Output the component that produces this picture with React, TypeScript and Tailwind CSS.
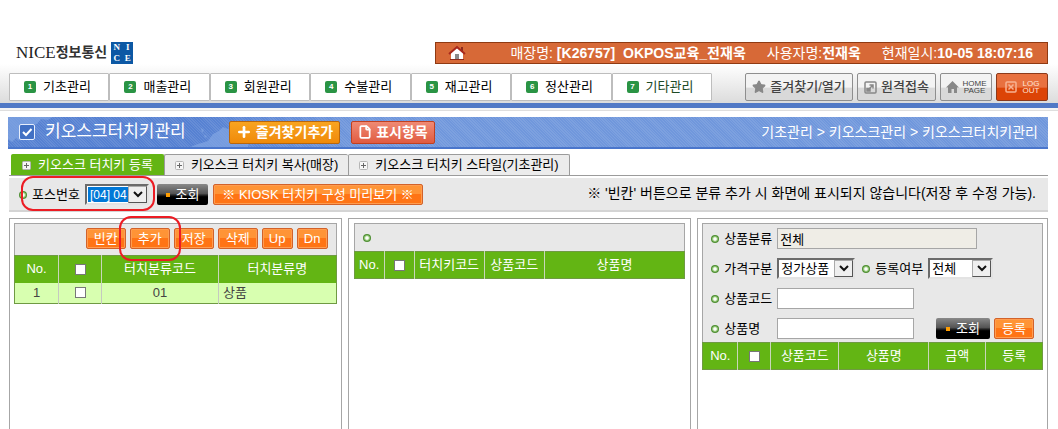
import type { ReactNode } from 'react';
import clsx from 'clsx';
import { File, Plus, Star } from 'lucide-react';

const menus = ['기초관리', '매출관리', '회원관리', '수불관리', '재고관리', '정산관리', '기타관리'];
const tabs = ['키오스크 터치키 등록', '키오스크 터치키 복사(매장)', '키오스크 터치키 스타일(기초관리)'];

function Bullet() {
  return (
    <svg viewBox="0 0 8 8" className="h-2 w-2 shrink-0" aria-hidden="true">
      <circle cx="4" cy="4" r="4" fill="#4f8f33" />
      <circle cx="4" cy="4" r="2.8" fill="#a9d68f" />
      <path d="M4 2.200v3.600M2.200 4h3.600" stroke="#fff" strokeWidth="1.6" />
    </svg>
  );
}

function OrangeButton({ children, className }: { children: ReactNode; className?: string }) {
  return (
    <button
      type="button"
      className={clsx(
        'h-[21px] shrink-0 whitespace-nowrap rounded-xs border border-[#d2622a] bg-linear-to-b from-[#ff9436] from-45% to-[#ff7415] to-50% text-[13px] leading-[18px] text-white shadow-[inset_0_0_0_1px_#ff9d50]',
        className,
      )}
    >
      {children}
    </button>
  );
}

function SearchButton({ className }: { className?: string }) {
  return (
    <button
      type="button"
      className={clsx(
        'flex h-[21px] shrink-0 items-center justify-center gap-1.5 rounded-xs bg-linear-to-b from-[#8a8a8a] via-[#555] via-45% to-black to-65% text-[13px] leading-[18px] text-white',
        className,
      )}
    >
      <span className="h-1 w-1 bg-[#ff9d00]" />
      조회
    </button>
  );
}

interface SelectBoxProps {
  id: string;
  value: string;
  className?: string;
  selected?: boolean;
}

function SelectBox({ id, value, className, selected }: SelectBoxProps) {
  return (
    <div
      className={clsx(
        'relative h-[21px] shrink-0 border-2 border-t-[#6b6b6b] border-r-[#e3e3e3] border-b-[#e3e3e3] border-l-[#6b6b6b] bg-white',
        selected && 'p-px',
        className,
      )}
    >
      <select
        id={id}
        className={clsx(
          'block h-full w-full appearance-none outline-none',
          selected ? 'bg-[#0078d7] pl-0.5 text-xs leading-4 text-white' : 'pl-0.5 text-[13px] leading-4 text-black',
        )}
      >
        <option>{value}</option>
      </select>
      <span className="pointer-events-none absolute inset-y-0 right-0 flex w-[19px] items-center justify-center border border-t-[#aaa] border-r-[#555] border-b-[#555] border-l-[#aaa] bg-[#efefef]">
        <svg viewBox="0 0 10 7" className="h-[7px] w-2.5" fill="none" stroke="#111" strokeWidth="2">
          <path d="M1 1l4 4 4-4" />
        </svg>
      </span>
    </div>
  );
}

function CheckBox({ label }: { label: string }) {
  return (
    <input
      type="checkbox"
      aria-label={label}
      className="mx-auto block h-[11px] w-[11px] appearance-none border border-[#777] bg-white"
    />
  );
}

interface GridTableProps {
  name: string;
  columns: { label: string; width: string }[];
  rows?: string[][];
}

function GridTable({ name, columns, rows = [] }: GridTableProps) {
  return (
    <table className="w-full table-fixed border-collapse border border-[#6f9a43] text-[13px] leading-[18px]">
      <thead>
        <tr className="h-[27px] bg-[#63b514] text-white">
          {columns.map((col, i) => (
            <th
              key={i}
              className={clsx('overflow-hidden whitespace-nowrap border-r border-[#c9d6bb] font-normal last:border-r-0', col.width)}
            >
              {col.label || <CheckBox label={`${name} 전체`} />}
            </th>
          ))}
        </tr>
      </thead>
      <tbody>
        {rows.map((row) => (
          <tr key={row[0]} className="h-[21px] bg-[#d8ffb0] text-[#444]">
            {row.map((cell, i) => (
              <td
                key={i}
                className={clsx('border-r border-[#c5c9c0] last:border-r-0', i === row.length - 1 ? 'pl-1' : 'text-center')}
              >
                {cell || <CheckBox label={`${name} ${row[0]}`} />}
              </td>
            ))}
          </tr>
        ))}
      </tbody>
    </table>
  );
}

function FieldLabel({ id, children }: { id: string; children: ReactNode }) {
  return (
    <label htmlFor={id} className="flex w-[66px] shrink-0 items-center gap-[5px] whitespace-nowrap">
      <Bullet />
      {children}
    </label>
  );
}

function Header() {
  const grayButton =
    'flex h-7 items-center justify-center gap-1 whitespace-nowrap rounded-xs border border-[#8e8e8e] bg-linear-to-b from-[#f3f3f3] from-50% to-[#d9d9d9] to-55% font-medium text-[#444]';
  return (
    <header>
      <div className="flex items-start justify-between pt-[42px] pr-2.5 pl-4">
        <div className="flex items-center gap-1">
          <span className="flex items-center whitespace-nowrap font-['Liberation_Serif','Noto_Sans_CJK_KR',serif] leading-[22px]">
            <span className="text-[17px] text-[#222]">NICE</span>
            <span className="text-sm font-bold text-[#333]">정보통신</span>
          </span>
          <span className="grid h-[22px] w-[22px] grid-cols-2 place-items-center bg-[#0c58a4] font-['Liberation_Serif',serif] text-[9px] leading-[9px] font-bold text-white">
            <span>N</span>
            <span>I</span>
            <span>C</span>
            <span>E</span>
          </span>
        </div>
        <div className="flex h-[22px] w-[613px] items-center justify-between border border-[#8f3a12] bg-[#d76937] pr-3.5 pl-3 text-sm leading-5 whitespace-nowrap text-white">
          <svg viewBox="0 0 18 16" className="h-4 w-[18px]" aria-hidden="true">
            <path d="M3 8l6-5 6 5v6H3z" fill="#fff" />
            <path d="M13 2h2v4h-2z" fill="#8c2a1c" />
            <path d="M1 9l8-7 8 7" fill="none" stroke="#a8281c" strokeWidth="2" />
            <path d="M7 9h4v5H7z" fill="#8a8a8a" />
            <path d="M2 14.500h14" stroke="#8c2a1c" />
          </svg>
          <div className="flex gap-[21px]">
            <span>
              매장명: <b>[K26757]&nbsp; OKPOS교육_전재욱</b>
            </span>
            <span>
              사용자명:<b>전재욱</b>
            </span>
            <span>
              현재일시:<b>10-05 18:07:16</b>
            </span>
          </div>
        </div>
      </div>
      <div className="flex items-start justify-between bg-linear-to-b from-white to-[#dcdcdc] pt-[9px] pr-2.5 pb-0.5 pl-[9px]">
        <nav className="flex w-[703px]">
          {menus.map((menu, i) => (
            <a
              key={menu}
              href="#"
              className={clsx(
                'flex h-7 flex-1 items-center gap-[7px] rounded-[1px] border border-[#bdbdbd] bg-white pl-3.5 text-[13px] whitespace-nowrap',
                i === 6 ? 'text-[#1d4a25]' : 'text-black',
              )}
            >
              <span className="flex h-3 w-3 items-center justify-center rounded-xs bg-[#2a9444] text-[8px] leading-3 font-bold text-white">
                {i + 1}
              </span>
              {menu}
            </a>
          ))}
        </nav>
        <div className="flex gap-1 text-[13px] leading-[18px]">
          <button type="button" className={clsx(grayButton, 'w-[108px]')}>
            <Star className="h-3.5 w-3.5 fill-[#888] text-[#888]" />
            즐겨찾기/열기
          </button>
          <button type="button" className={clsx(grayButton, 'w-[79px]')}>
            <svg viewBox="0 0 13 13" className="h-[13px] w-[13px]" fill="none" stroke="#888" strokeWidth="1.500">
              <rect x="1" y="1" width="11" height="11" rx="1" />
              <path d="M5 8l4-4M5.500 4H9v3.500" />
              <path d="M3 7.500h3V10H3z" fill="#888" />
            </svg>
            원격접속
          </button>
          <button type="button" className={clsx(grayButton, 'w-[52px]')}>
            <svg viewBox="0 0 13 13" className="h-[13px] w-[13px]" fill="#888">
              <path d="M6.500 0L13 6.500h-2V12H8V8H5.500v4H2V6.500H0z" />
            </svg>
            <span className="text-[8px] leading-[7px]">
              HOME
              <br />
              PAGE
            </span>
          </button>
          <button
            type="button"
            className="flex h-7 w-[52px] items-center justify-center gap-1.5 rounded-xs border border-[#8c3a1a] bg-linear-to-b from-[#e8713f] from-50% to-[#dc4406] to-55% text-[8px] leading-[7px] text-[#ffe4d6]"
          >
            <svg viewBox="0 0 12 12" className="h-3 w-3" fill="none" stroke="#f7b393" strokeWidth="1.500">
              <rect x="1" y="1" width="10" height="10" rx="1" />
              <path d="M3.500 3.500l5 5M8.500 3.500l-5 5" />
            </svg>
            <span>
              LOG
              <br />
              OUT
            </span>
          </button>
        </div>
      </div>
      <div className="h-[5px] bg-[#5179c6]" />
      <div className="h-[3px] border-b border-[#dedede] bg-[#f4f4f4]" />
    </header>
  );
}

function TitleBar() {
  return (
    <div className="relative mt-1.5 mr-2.5 ml-2 flex h-8 items-center overflow-hidden border-b-2 border-[#4a76cc] bg-[repeating-linear-gradient(45deg,#ffffff00_0_1px,#ffffff18_1px_2px),linear-gradient(90deg,#5681d2_0,#5681d2_18%,#7097dc_34%,#7097dc_100%)] pr-2.5 pl-[11px] whitespace-nowrap text-white">
      <svg viewBox="0 0 240 32" className="absolute top-0 left-0 h-8 w-60" fill="#82a6e4" opacity="0.7" aria-hidden="true">
        <path d="M0 0h45l-5 3-7-1-4 5-6 1-3 5-4 2-5 9-3-3-4 4-4-3z" />
        <path d="M200 24l5-7 6-3 4-4 5 2 4-4 16 1v23h-62l9-4z" />
        <path d="M193 11l3 2-2 3zM196 18l3 1-2 2z" />
      </svg>
      <svg viewBox="0 0 16 16" className="relative h-4 w-4" aria-hidden="true">
        <rect x="0.5" y="0.5" width="15" height="15" rx="1.500" fill="#4170c4" stroke="#e6eefc" />
        <path d="M4 8l3 3 5.500-6" fill="none" stroke="#fff" strokeWidth="2" />
      </svg>
      <h1 className="relative ml-2.5 w-[184px] text-[17px] leading-[22px]">키오스크터치키관리</h1>
      <button
        type="button"
        className="relative flex h-[23px] w-[111px] items-center justify-center gap-1 rounded-xs border border-[#b8660c] bg-linear-to-b from-[#f9a420] to-[#ef8a08] text-sm leading-5 font-bold"
      >
        <Plus className="h-4 w-4" strokeWidth={4} />
        즐겨찾기추가
      </button>
      <button
        type="button"
        className="ml-[11px] flex h-[23px] w-[84px] items-center justify-center gap-1 rounded-xs border border-[#c04020] bg-linear-to-b from-[#ef8a74] to-[#e05a40] text-sm leading-5 font-bold"
      >
        <File className="h-3.5 w-3.5" strokeWidth={3} />
        표시항목
      </button>
      <p className="ml-auto text-sm leading-[18px]">기초관리 &gt; 키오스크관리 &gt; 키오스크터치키관리</p>
    </div>
  );
}

export default function App() {
  return (
    <div className="flex min-h-screen flex-col bg-white font-['Liberation_Sans','Noto_Sans_CJK_KR',sans-serif] text-black">
      <Header />
      <TitleBar />

      <div role="tablist" className="mt-[5px] mr-2.5 ml-[9px] flex border-b border-[#9b9b9b] pl-0.5">
        {tabs.map((tab, i) => (
          <button
            key={tab}
            type="button"
            role="tab"
            aria-selected={i === 0}
            className={clsx(
              'flex h-[21px] items-center gap-[7px] whitespace-nowrap rounded-t-xs border border-b-0 px-2.5 text-[13px] leading-[18px]',
              i === 0 ? 'border-[#63b514] bg-[#63b514] text-white' : 'border-[#9b9b9b] bg-[#ececec] text-black',
              i === 1 && 'border-r-0',
            )}
          >
            <svg viewBox="0 0 9 9" className="h-[9px] w-[9px]" aria-hidden="true">
              <rect x="0.5" y="0.5" width="8" height="8" rx="1" fill="#f6f6f6" stroke="#b5b5b5" />
              <path d="M4.500 2v5M2 4.500h5" stroke="#666" />
            </svg>
            {tab}
          </button>
        ))}
      </div>

      <div className="mt-0.5 mr-2.5 ml-[9px] flex h-[34px] items-start border-b-2 border-[#d4d4d4] bg-[#e8e8e8] pt-1.5 pr-3 pl-2.5 text-[13px] leading-[18px]">
        <div className="relative flex items-center gap-1">
          <label htmlFor="pos" className="flex w-[62px] items-center gap-[5px] whitespace-nowrap">
            <Bullet />
            포스번호
          </label>
          <SelectBox id="pos" value="[04] 04" selected className="w-16" />
          <div className="pointer-events-none absolute -top-2 -right-1.5 -bottom-1.5 left-0.5 rounded-xl border-2 border-[#ec1c24]" />
        </div>
        <SearchButton className="ml-2 w-[51px]" />
        <OrangeButton className="ml-[5px] w-[210px]">※ KIOSK 터치키 구성 미리보기 ※</OrangeButton>
        <p className="ml-auto text-sm leading-[18px] whitespace-nowrap">
          ※ '빈칸' 버튼으로 분류 추가 시 화면에 표시되지 않습니다(저장 후 수정 가능).
        </p>
      </div>

      <main className="mt-1.5 mr-2.5 ml-[9px] grid flex-1 grid-cols-[333fr_344fr_351fr] gap-1.5">
        <section className="min-w-0 border border-b-0 border-[#a6a6a6] p-1">
          <div className="flex h-8 items-start justify-end gap-1 border border-b-0 border-[#a6a6a6] bg-[#e8e8e8] pt-1 pr-2">
            <OrangeButton className="w-10">빈칸</OrangeButton>
            <div className="relative">
              <OrangeButton className="block w-10">추가</OrangeButton>
              <div className="pointer-events-none absolute -inset-x-[11px] -inset-y-3 rounded-xl border-2 border-[#ec1c24]" />
            </div>
            <OrangeButton className="w-10">저장</OrangeButton>
            <OrangeButton className="w-10">삭제</OrangeButton>
            <OrangeButton className="w-[31px]">Up</OrangeButton>
            <OrangeButton className="w-[31px]">Dn</OrangeButton>
          </div>
          <GridTable
            name="터치분류"
            columns={[
              { label: 'No.', width: 'w-11' },
              { label: '', width: 'w-[43px]' },
              { label: '터치분류코드', width: 'w-[117px]' },
              { label: '터치분류명', width: 'w-auto' },
            ]}
            rows={[['1', '', '01', '상품']]}
          />
        </section>

        <section className="min-w-0 border border-b-0 border-[#a6a6a6] px-[5px] py-1">
          <div className="flex h-7 items-center border border-b-0 border-[#a6a6a6] bg-[#e8e8e8] pl-2">
            <Bullet />
          </div>
          <GridTable
            name="터치키"
            columns={[
              { label: 'No.', width: 'w-[30px]' },
              { label: '', width: 'w-[30px]' },
              { label: '터치키코드', width: 'w-[70px]' },
              { label: '상품코드', width: 'w-[60px]' },
              { label: '상품명', width: 'w-auto' },
            ]}
          />
        </section>

        <section className="min-w-0 border border-b-0 border-[#a6a6a6] p-1">
          <form className="flex flex-col gap-[9px] border border-b-0 border-[#a6a6a6] bg-[#e8e8e8] pt-1 pr-2 pb-[3px] pl-2 text-[13px] leading-[18px]">
            <div className="flex h-[21px] items-center">
              <FieldLabel id="category">상품분류</FieldLabel>
              <input
                id="category"
                readOnly
                defaultValue="전체"
                className="h-[21px] w-[200px] border border-[#a6a6a6] bg-[#efede6] px-0.5"
              />
            </div>
            <div className="flex h-[21px] items-center">
              <FieldLabel id="price">가격구분</FieldLabel>
              <SelectBox id="price" value="정가상품" className="mr-[7px] w-[78px]" />
              <FieldLabel id="registered">등록여부</FieldLabel>
              <SelectBox id="registered" value="전체" className="w-[65px]" />
            </div>
            <div className="flex h-[21px] items-center">
              <FieldLabel id="code">상품코드</FieldLabel>
              <input id="code" className="h-[21px] w-[137px] border border-[#a6a6a6] bg-white px-0.5" />
            </div>
            <div className="flex h-[21px] items-center">
              <FieldLabel id="product">상품명</FieldLabel>
              <input id="product" className="h-[21px] w-[137px] border border-[#a6a6a6] bg-white px-0.5" />
              <SearchButton className="mr-1 ml-auto w-[54px]" />
              <OrangeButton className="w-10">등록</OrangeButton>
            </div>
          </form>
          <GridTable
            name="상품"
            columns={[
              { label: 'No.', width: 'w-[35px]' },
              { label: '', width: 'w-[33px]' },
              { label: '상품코드', width: 'w-[68px]' },
              { label: '상품명', width: 'w-[90px]' },
              { label: '금액', width: 'w-[57px]' },
              { label: '등록', width: 'w-auto' },
            ]}
          />
        </section>
      </main>
    </div>
  );
}
